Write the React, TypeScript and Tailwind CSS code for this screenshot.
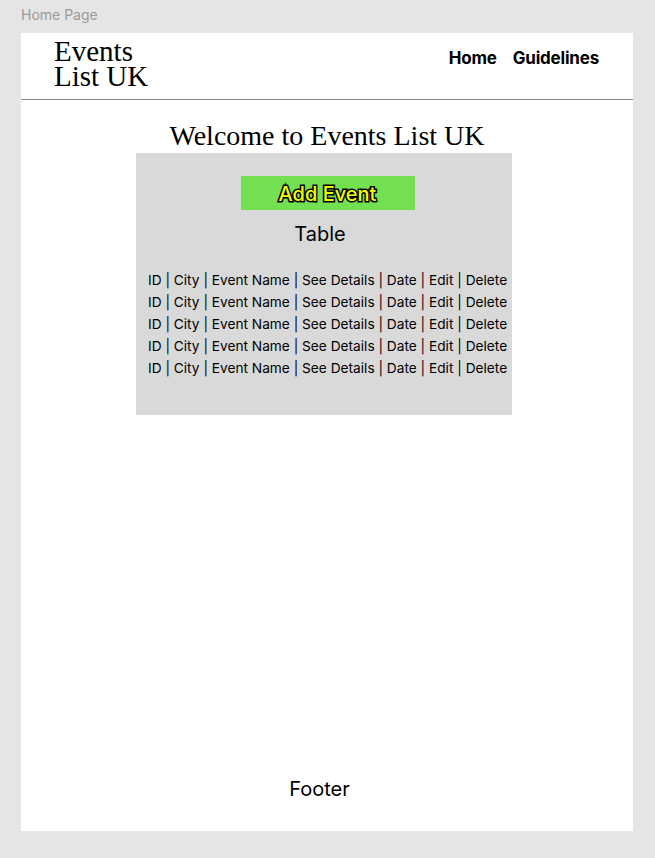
const rows = [1, 2, 3, 4, 5];
const cols = ['ID', 'City', 'Event Name', 'See Details', 'Date', 'Edit', 'Delete'];

export default function App() {
  return (
    <div className="min-h-[858px] w-[655px] bg-[#e5e5e5] font-['Inter',sans-serif] text-black">
      <div className="h-[33px] pl-[21px] pt-[6px] text-[14px] leading-[18px] text-[#9a9a9a]">Home Page</div>

      <div className="ml-[21px] flex h-[798px] w-[612px] flex-col bg-white">
        {/* Header */}
        <header className="flex h-[67px] items-start justify-between border-b border-[#8a8a8a] pl-[33px] pr-[34px]">
          <div className="pt-[6px] font-['Liberation_Serif',serif] text-[29px] leading-[25px]">
            Events
            <br />
            List UK
          </div>
          <nav className="flex gap-[16px] pt-[14px] text-[17px] font-bold leading-[22px] tracking-[-0.2px]">
            <span>Home</span>
            <span>Guidelines</span>
          </nav>
        </header>

        {/* Main */}
        <main className="flex flex-1 flex-col items-center">
          <h1 className="mt-[19px] font-['Liberation_Serif',serif] text-[28px] leading-[34px]">Welcome to Events List UK</h1>
          <div className="mr-[6px] flex h-[262px] w-[376px] flex-col items-center bg-[#d9d9d9]">
            <button className="ml-[7px] mt-[23px] flex h-[34px] w-[174px] items-center justify-center bg-[#72e050] pt-[1px] text-[20px] font-medium leading-none text-[#f0ff00] [-webkit-text-stroke:3px_black] [paint-order:stroke_fill]">
              Add Event
            </button>
            <div className="mr-[8px] mt-[12px] text-[20px] leading-[24px]">Table</div>
            <div className="ml-[12px] mt-[23px] flex flex-col self-start text-[13.7px] leading-[22px]">
              {rows.map((r) => (
                <div key={r} className="whitespace-nowrap">
                  {cols.join(' | ')}
                </div>
              ))}
            </div>
          </div>
        </main>

        <footer className="pb-[30px] pr-[15px] text-center text-[20px] leading-[24px]">Footer</footer>
      </div>
    </div>
  );
}
